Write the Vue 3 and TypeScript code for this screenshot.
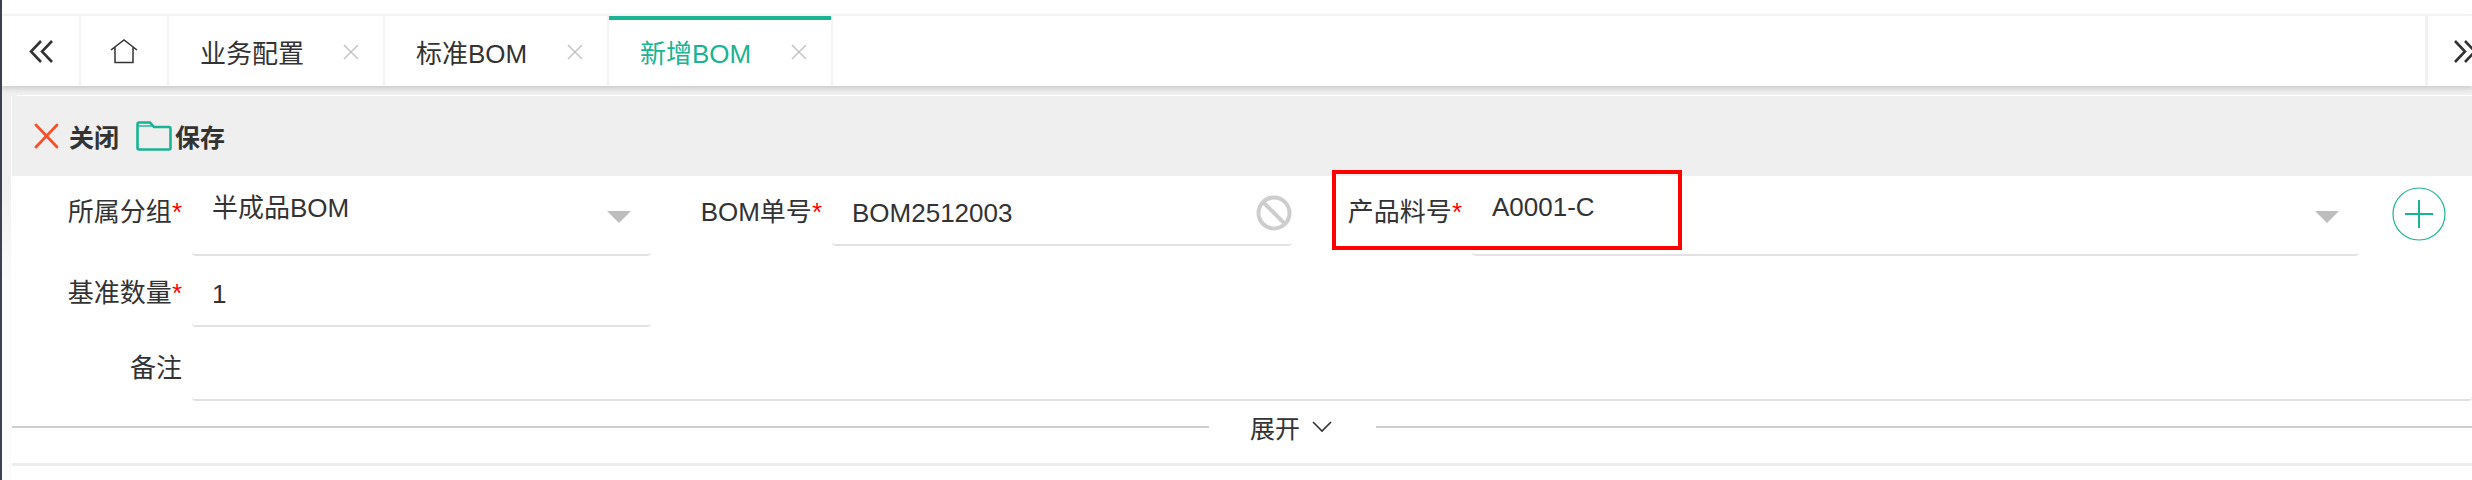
<script setup lang="ts">
const tabs = [
  { label: '业务配置', width: 216, active: false },
  { label: '标准BOM', width: 224, active: false },
  { label: '新增BOM', width: 224, active: true },
];
</script>

<template>
  <div class="page">
    <div class="tabbar">
      <div class="nav-btn left">
        <svg width="24" height="23" viewBox="0 0 24 23" fill="none" stroke="#333" stroke-width="2.6">
          <path d="M12 1 2 11.500 12 22M23 1 13 11.500 23 22" />
        </svg>
      </div>
      <div class="home">
        <svg width="28" height="25" viewBox="0 0 28 25" fill="none" stroke="#333" stroke-width="1.5">
          <path d="M1 11 14 1l13 10M5 8v15.500h18V8" />
        </svg>
      </div>
      <div v-for="tab in tabs" :key="tab.label" class="tab" :class="{ active: tab.active }" :style="{ width: tab.width + 'px' }">
        <span class="tab-label">{{ tab.label }}</span>
        <svg class="tab-close" width="16" height="16" viewBox="0 0 16 16" fill="none" stroke="#c4c4c4" stroke-width="1.5">
          <path d="m1 1 14 14M15 1 1 15" />
        </svg>
      </div>
      <div class="spacer" />
      <div class="nav-btn right">
        <svg width="24" height="23" viewBox="0 0 24 23" fill="none" stroke="#333" stroke-width="2.6">
          <path d="m1 1 10 10.500L1 22M11 1l10 10.500L11 22" />
        </svg>
      </div>
    </div>

    <div class="content">
      <div class="main">
        <div class="toolbar">
          <button class="tool close">
            <svg width="25" height="26" viewBox="0 0 25 26" fill="none" stroke="#f4512c" stroke-width="2.8" stroke-linecap="round">
              <path d="m2 2 21 22M23 2 2 24" />
            </svg>
            <span>关闭</span>
          </button>
          <button class="tool save">
            <svg width="36" height="30" viewBox="0 0 36 30" fill="none" stroke="#1ab394" stroke-width="2.600">
              <path d="M1.500 5V3a1.500 1.500 0 0 1 1.500-1.500h11L18 6h15a1.500 1.500 0 0 1 1.500 1.500V27a1.500 1.500 0 0 1-1.500 1.500H3A1.500 1.500 0 0 1 1.500 27z" />
              <path d="M2 5h14" stroke-width="1.400" />
            </svg>
            <span>保存</span>
          </button>
        </div>

        <div class="form">
          <div class="row first">
            <div class="field group">
              <label class="label">所属分组<i>*</i></label>
              <div class="control tall">
                <span class="value raised">半成品BOM</span>
                <span class="caret" />
              </div>
            </div>
            <div class="field bom">
              <label class="label bom-label">BOM单号<i>*</i></label>
              <div class="control short">
                <span class="value">BOM2512003</span>
                <svg class="ban" width="36" height="36" viewBox="0 0 36 36" fill="none" stroke="#cdcdcd" stroke-width="4">
                  <circle cx="18" cy="18" r="15.500" />
                  <path d="M7 7l22 22" />
                </svg>
              </div>
            </div>
            <div class="field product">
              <label class="label">产品料号<i>*</i></label>
              <div class="control tall">
                <span class="value product-value">A0001-C</span>
                <span class="caret" />
              </div>
              <span class="add">
                <svg width="54" height="54" viewBox="0 0 54 54" fill="none" stroke="#1ab394">
                  <circle cx="27" cy="27" r="26" stroke-width="1.200" />
                  <path d="M13 27h28M27 13v28" stroke-width="2" />
                </svg>
              </span>
              <div class="highlight" />
            </div>
          </div>

          <div class="row second">
            <div class="field group">
              <label class="label">基准数量<i>*</i></label>
              <div class="control">
                <span class="value count">1</span>
              </div>
            </div>
          </div>

          <div class="row note">
            <div class="field wide">
              <label class="label">备注</label>
              <div class="control" />
            </div>
          </div>

          <div class="expand">
            <span class="line fixed" />
            <span class="expand-text">
              展开
              <svg width="20" height="12" viewBox="0 0 20 12" fill="none" stroke="#333" stroke-width="1.600">
                <path d="m1 1 9 9 9-9" />
              </svg>
            </span>
            <span class="line" />
          </div>
          <div class="bottom-line" />
        </div>
      </div>
    </div>
  </div>
</template>

<style>
html,
body {
  margin: 0;
  background: #fff;
}
</style>

<style scoped>
.page {
  width: 2472px;
  height: 480px;
  overflow: hidden;
  box-sizing: border-box;
  border-left: 2px solid #3b4151;
  padding-top: 14px;
  font-family: 'Liberation Sans', 'Noto Sans CJK SC', sans-serif;
  color: #333;
}

.tabbar {
  position: relative;
  display: flex;
  height: 70px;
  border-top: 2px solid #f3f3f3;
  box-shadow: 0 3px 5px rgba(0, 0, 0, 0.14);
  background: #fff;
}

.nav-btn {
  display: flex;
  align-items: center;
  justify-content: center;
  box-sizing: border-box;
}

.nav-btn svg {
  flex: none;
}

.nav-btn.left {
  width: 79px;
  border-right: 2px solid #f2f2f2;
}

.nav-btn.right {
  flex: 0 0 47px;
  justify-content: flex-start;
  padding-left: 26px;
  overflow: hidden;
  border-left: 3px solid #f2f2f2;
}

.home {
  display: flex;
  align-items: center;
  justify-content: center;
  box-sizing: border-box;
  width: 88px;
  border-right: 2px solid #f2f2f2;
}

.tab {
  display: flex;
  align-items: center;
  box-sizing: border-box;
  padding-left: 31px;
  border-right: 2px solid #f2f2f2;
  font-size: 26px;
  color: #333;
}

.tab-label {
  flex: 1;
  white-space: nowrap;
}

.tab-close {
  margin-right: 24px;
  margin-top: 2px;
}

.tab.active {
  color: #1ab394;
  box-shadow: inset 0 4px 0 #1ab394;
}

.spacer {
  flex: 1;
}

.content {
  height: 394px;
  padding: 10px 0 0 9px;
  background: linear-gradient(#f0f0f0 100px, #fbfbfb 200px);
}

.main {
  height: 100%;
  border-left: 1px solid #fff;
  background: #fff;
}

.toolbar {
  position: relative;
  display: flex;
  align-items: center;
  gap: 17px;
  height: 80px;
  padding-left: 22px;
  background: #efefef;
}

/* thin white edge on top of the grey bar */
.toolbar::before {
  content: '';
  position: absolute;
  left: 5px;
  right: 0;
  top: -1px;
  height: 1px;
  background: #fff;
}

.tool {
  display: flex;
  align-items: center;
  gap: 10px;
  padding: 0;
  border: 0;
  background: none;
  font: bold 25px 'Liberation Sans', 'Noto Sans CJK SC', sans-serif;
  color: #333;
}

.tool.save {
  gap: 3px;
}

.form {
  font-size: 26px;
}

.row {
  display: flex;
}

.row.first {
  height: 80px;
}

.row.second {
  height: 71px;
}

.row.note {
  height: 74px;
}

.field {
  display: flex;
  position: relative;
}

.field.group {
  width: 639px;
}

.field.wide {
  flex: 1;
}

.field.bom {
  width: 641px;
}

.field.product {
  flex: 1;
}

.label {
  display: block;
  box-sizing: border-box;
  width: 180px;
  flex: none;
  padding: 21px 10px 0 0;
  line-height: 30px;
  text-align: right;
  white-space: nowrap;
  color: #333;
}

.second .label {
  padding-top: 22px;
}

.note .label {
  padding-top: 26px;
}

.label i {
  color: #f00;
  font-style: normal;
}

.bom-label {
  width: 181px;
}

.control {
  position: relative;
  flex: 1;
  box-sizing: border-box;
  padding: 0 20px;
  border-bottom: 2px solid #e2e2e2;
  border-radius: 0 0 4px 4px;
}

.control.tall {
  height: 80px;
}

.control.short {
  height: 70px;
  flex: none;
  width: 460px;
}

.value {
  display: block;
  padding-top: 22px;
  line-height: 30px;
  white-space: nowrap;
}

.value.raised {
  padding-top: 17px;
}

.value.product-value {
  padding-top: 16px;
}

.value.count {
  padding-top: 23px;
}

.caret {
  position: absolute;
  right: 20px;
  top: 35px;
  border-style: solid;
  border-width: 12px 12px 0;
  border-color: #bdbdbd transparent transparent;
}

.ban {
  position: absolute;
  right: 0;
  top: 19px;
}

.field.product .control {
  flex: none;
  width: 887px;
}

.add {
  display: block;
  margin: 11px 0 0 33px;
}

.highlight {
  position: absolute;
  left: 40px;
  top: -6px;
  width: 350px;
  height: 80px;
  box-sizing: border-box;
  border: 4px solid #f00;
}

.expand {
  display: flex;
  align-items: center;
  height: 51px;
}

.line {
  flex: 1;
  height: 2px;
  background: #cfcfcf;
}

.line.fixed {
  flex: 0 0 1197px;
}

.expand-text {
  display: flex;
  align-items: center;
  gap: 12px;
  padding: 0 44px 0 41px;
  font-size: 25px;
}

.bottom-line {
  margin-top: 11px;
  height: 3px;
  background: #ededed;
}
</style>
